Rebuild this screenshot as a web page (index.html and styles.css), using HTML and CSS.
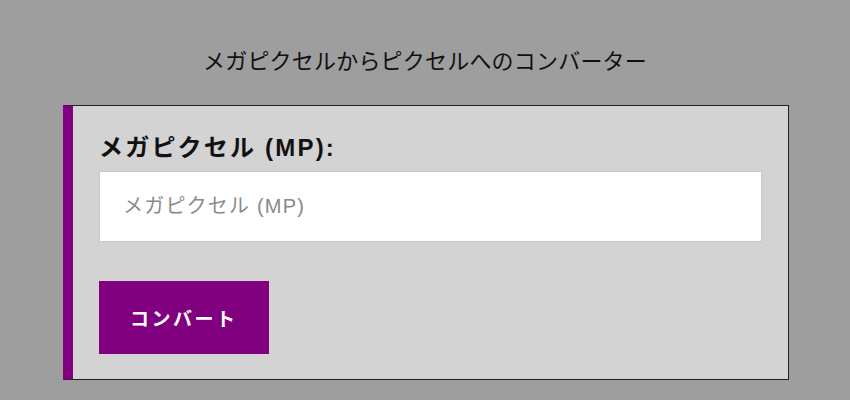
FILE: index.html
```html
<!DOCTYPE html>
<html lang="ja">
<head>
<meta charset="utf-8">
<title>メガピクセルからピクセルへのコンバーター</title>
<link rel="stylesheet" href="styles.css">
</head>
<body>
<h1 class="title">メガピクセルからピクセルへのコンバーター</h1>
<div class="card">
  <label class="label" for="mp">メガピクセル (MP):</label>
  <input class="input" id="mp" type="text" placeholder="メガピクセル (MP)">
  <button class="btn" type="button">コンバート</button>
</div>
</body>
</html>
```
FILE: styles.css
```css
html, body {
  margin: 0;
  padding: 0;
}
body {
  background: #9e9e9e;
  font-family: "Liberation Sans", "Noto Sans CJK JP", sans-serif;
  color: #111;
}
.title {
  margin: 47px 0 28px;
  font-size: 22px;
  line-height: 30px;
  font-weight: normal;
  letter-spacing: 0.2px;
  text-align: center;
  color: #111;
}
.card {
  box-sizing: border-box;
  width: 726px;
  margin: 0 0 0 63px;
  background: #d3d3d3;
  border: 1px solid #222;
  border-left: 10px solid #800080;
  padding: 26px 26px 25px 26px;
}
.label {
  display: block;
  font-size: 24px;
  line-height: 32px;
  font-weight: bold;
  letter-spacing: 2.2px;
  color: #111;
  margin-bottom: 7px;
}
.input {
  display: block;
  box-sizing: border-box;
  width: 100%;
  height: 71px;
  margin: 0;
  border: 1px solid #c8c8c8;
  background: #fff;
  padding: 0 23px;
  font-family: "Liberation Sans", "Noto Sans CJK JP", sans-serif;
  font-size: 20px;
  letter-spacing: 1.2px;
  color: #333;
  outline: none;
}
.input::placeholder {
  color: #8a8a8a;
}
.btn {
  display: block;
  box-sizing: border-box;
  height: 73px;
  margin: 39px 0 0;
  padding: 0 31px 0 31px;
  border: none;
  background: #800080;
  color: #fff;
  font-family: "Liberation Sans", "Noto Sans CJK JP", sans-serif;
  font-size: 19px;
  font-weight: bold;
  letter-spacing: 2.5px;
  cursor: pointer;
}
```
